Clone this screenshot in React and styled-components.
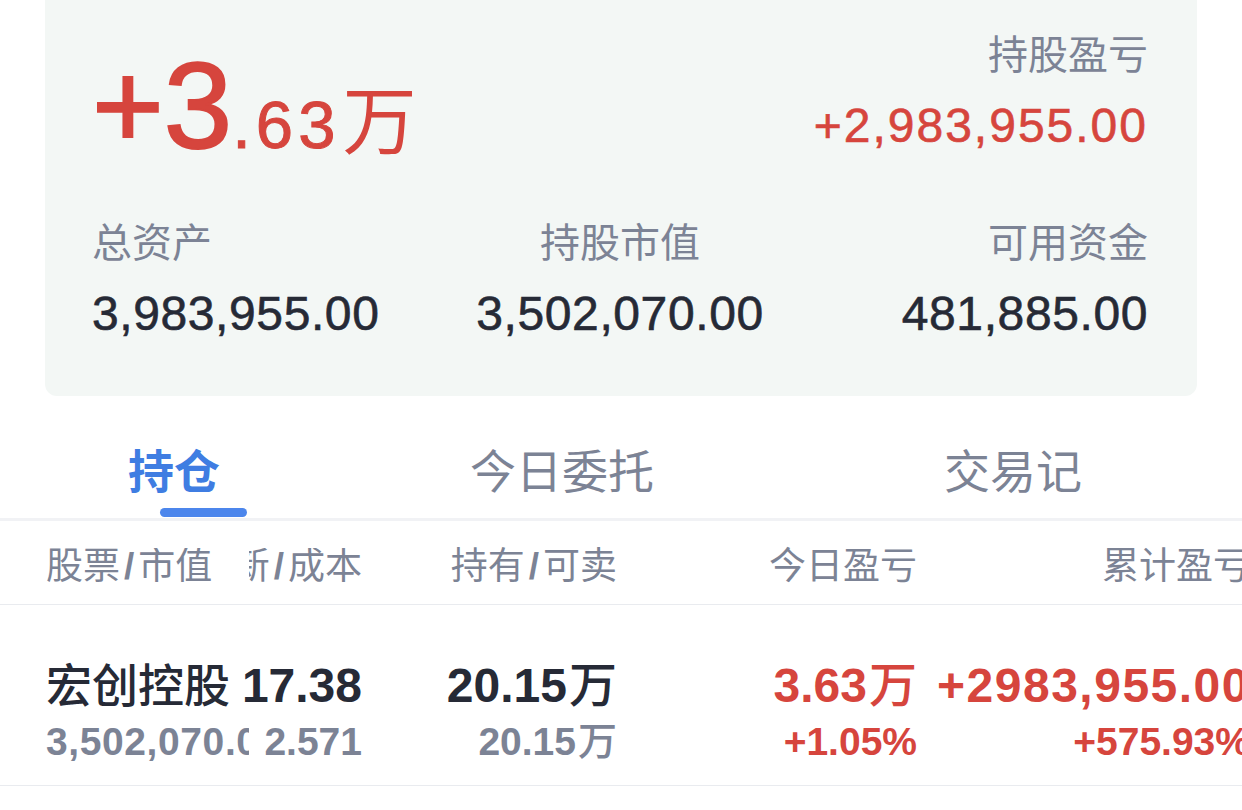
import React from "react";
import styled, { createGlobalStyle } from "styled-components";

const GlobalStyle = createGlobalStyle`
  html, body {
    margin: 0;
    padding: 0;
    background: #ffffff;
  }
  body {
    width: 1242px;
    height: 810px;
    overflow: hidden;
    font-family: "Liberation Sans", "Noto Sans CJK SC", sans-serif;
    -webkit-font-smoothing: antialiased;
  }
`;

const RED = "#d6453d";
const GRAY = "#7c8395";
const DARK = "#262a36";
const BLUE = "#3f7de2";

const Page = styled.div`
  width: 1242px;
  height: 810px;
  background: #fff;
  overflow: hidden;
`;

/* ---------- summary card ---------- */

const Card = styled.section`
  margin: 0 45px;
  background: #f3f7f5;
  border-radius: 0 0 12px 12px;
  padding: 35px 49px 58px 47px;
`;

const TopRow = styled.div`
  display: flex;
  justify-content: space-between;
  align-items: flex-start;
  height: 132px;
`;

const BigNumber = styled.div`
  margin-top: 9px;
  color: ${RED};
  font-size: 123px;
  line-height: 1;
  white-space: nowrap;
  -webkit-text-stroke: 2px ${RED};
`;

const BigPart = styled.span`
  font-size: ${(p) => p.$size}px;
  line-height: 1;
  margin-left: ${(p) => p.$gap || 0}px;
  letter-spacing: ${(p) => p.$spacing || 0}px;
  -webkit-text-stroke: ${(p) => p.$stroke || 0}px ${RED};
`;

const Stat = styled.div`
  display: flex;
  flex-direction: column;
  align-items: ${(p) => p.$align || "flex-start"};
`;

const Label = styled.div`
  color: ${GRAY};
  font-size: 40px;
  line-height: 40px;
  white-space: nowrap;
`;

const Value = styled.div`
  margin-top: 27px;
  color: ${(p) => (p.$red ? RED : DARK)};
  font-size: 48px;
  line-height: 48px;
  white-space: nowrap;
  letter-spacing: ${(p) => (p.$red ? 2 : 0.6)}px;
  -webkit-text-stroke: 0.6px ${(p) => (p.$red ? RED : DARK)};
`;

const StatsGrid = styled.div`
  margin-top: 56px;
  display: grid;
  grid-template-columns: 1fr 1fr 1fr;
`;

/* ---------- tabs ---------- */

const TabBar = styled.nav`
  margin-top: 53px;
  display: flex;
  align-items: flex-start;
  height: 69px;
  border-bottom: 3px solid #f1f2f5;
`;

const Tab = styled.div`
  position: relative;
  margin-left: ${(p) => p.$offset}px;
  font-size: 46px;
  line-height: 46px;
  color: ${(p) => (p.$active ? BLUE : GRAY)};
  font-weight: ${(p) => (p.$active ? 600 : 400)};
  white-space: nowrap;
`;

const Indicator = styled.span`
  position: absolute;
  left: 32px;
  top: 59px;
  width: 87px;
  height: 9px;
  border-radius: 5px;
  background: #4c86ec;
`;

/* ---------- holdings table ---------- */

const Table = styled.div`
  width: 1242px;
  overflow: hidden;
`;

const Row = styled.div`
  display: grid;
  grid-template-columns: 203px 113px 255px 300px 333px;
  padding-left: 46px;
  width: 1250px;
  box-sizing: border-box;
  border-bottom: 1px solid #e9ebef;
  padding-top: ${(p) => p.$top}px;
  padding-bottom: ${(p) => p.$bottom}px;
`;

const Cell = styled.div`
  display: flex;
  flex-direction: column;
  align-items: ${(p) => (p.$left ? "flex-start" : "flex-end")};
  overflow: ${(p) => (p.$clip ? "hidden" : "visible")};
  min-width: 0;
`;

const HeadText = styled.div`
  color: ${GRAY};
  font-size: 37px;
  line-height: 37px;
  white-space: nowrap;
`;

const Slash = styled.span`
  font-weight: 700;
  margin: 0 4px;
`;

const Main = styled.div`
  color: ${(p) => (p.$red ? RED : DARK)};
  font-size: ${(p) => p.$size || 48}px;
  line-height: 48px;
  font-weight: ${(p) => p.$weight || 700};
  letter-spacing: ${(p) => p.$spacing || 0}px;
  white-space: nowrap;
`;

const Sub = styled.div`
  margin-top: 12px;
  color: ${(p) => (p.$red ? RED : GRAY)};
  font-size: 39px;
  line-height: 40px;
  font-weight: 700;
  letter-spacing: ${(p) => p.$spacing || 0}px;
  white-space: nowrap;
`;

const Unit = styled.span`
  font-weight: 500;
  margin-left: 2px;
`;

const Head = ({ a, b }) => (
  <HeadText>
    {a}
    <Slash>/</Slash>
    {b}
  </HeadText>
);

export default function App() {
  return (
    <Page>
      <GlobalStyle />
      <Card>
        <TopRow>
          <BigNumber>
            +3
            <BigPart $size={67} $spacing={5} $stroke={1}>
              .63
            </BigPart>
            <BigPart $size={74} $gap={2} $stroke={0}>
              万
            </BigPart>
          </BigNumber>
          <Stat $align="flex-end">
            <Label>持股盈亏</Label>
            <Value $red>+2,983,955.00</Value>
          </Stat>
        </TopRow>
        <StatsGrid>
          <Stat $align="flex-start">
            <Label>总资产</Label>
            <Value>3,983,955.00</Value>
          </Stat>
          <Stat $align="center">
            <Label>持股市值</Label>
            <Value>3,502,070.00</Value>
          </Stat>
          <Stat $align="flex-end">
            <Label>可用资金</Label>
            <Value>481,885.00</Value>
          </Stat>
        </StatsGrid>
      </Card>

      <TabBar>
        <Tab $active $offset={128}>
          持仓
          <Indicator />
        </Tab>
        <Tab $offset={250}>今日委托</Tab>
        <Tab $offset={290}>交易记</Tab>
      </TabBar>

      <Table>
        <Row $top={27} $bottom={19}>
          <Cell $left $clip>
            <Head a="股票" b="市值" />
          </Cell>
          <Cell $clip>
            <Head a="最新" b="成本" />
          </Cell>
          <Cell>
            <Head a="持有" b="可卖" />
          </Cell>
          <Cell>
            <HeadText>今日盈亏</HeadText>
          </Cell>
          <Cell>
            <HeadText>累计盈亏</HeadText>
          </Cell>
        </Row>
        <Row $top={57} $bottom={23}>
          <Cell $left $clip>
            <Main $size={46} $weight={500}>宏创控股</Main>
            <Sub $spacing={0.6}>3,502,070.00</Sub>
          </Cell>
          <Cell>
            <Main>17.38</Main>
            <Sub>2.571</Sub>
          </Cell>
          <Cell>
            <Main>
              20.15<Unit>万</Unit>
            </Main>
            <Sub>
              20.15<Unit>万</Unit>
            </Sub>
          </Cell>
          <Cell>
            <Main $red>
              3.63<Unit>万</Unit>
            </Main>
            <Sub $red>+1.05%</Sub>
          </Cell>
          <Cell>
            <Main $red $spacing={1.5}>
              +2983,955.00
            </Main>
            <Sub $red>+575.93%</Sub>
          </Cell>
        </Row>
      </Table>
    </Page>
  );
}
